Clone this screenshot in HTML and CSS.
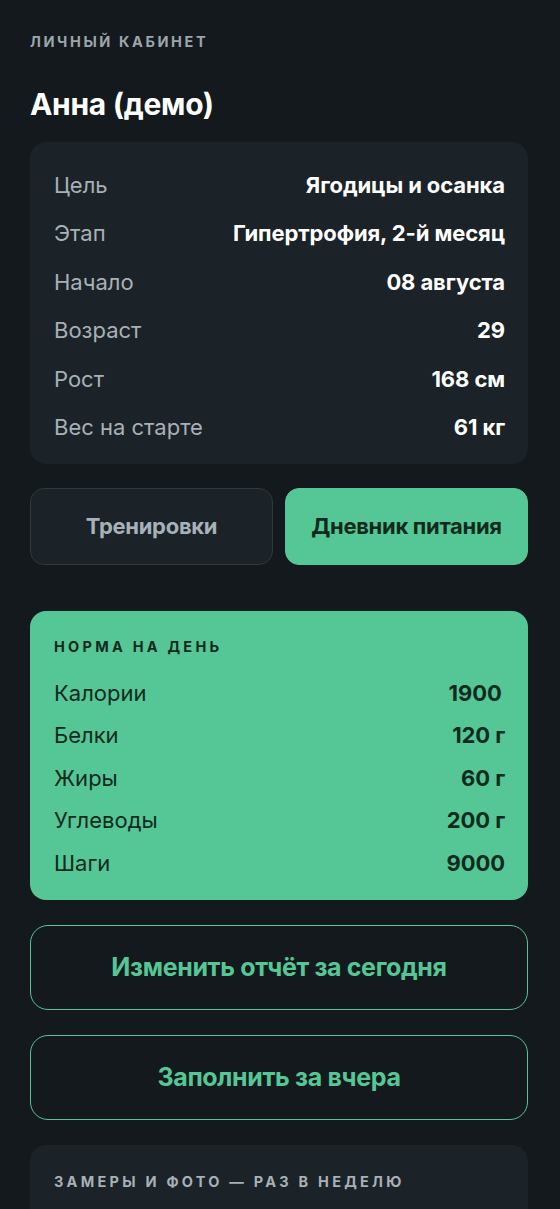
FILE: index.html
```html
<!DOCTYPE html>
<html lang="ru">
<head>
<meta charset="utf-8">
<title>Личный кабинет</title>
<link rel="stylesheet" href="styles.css">
</head>
<body>
<main class="page">
  <div class="eyebrow">Личный кабинет</div>
  <h1 class="title">Анна (демо)</h1>

  <section class="card info">
    <div class="row"><span class="label">Цель</span><span class="value">Ягодицы и осанка</span></div>
    <div class="row"><span class="label">Этап</span><span class="value">Гипертрофия, 2-й месяц</span></div>
    <div class="row"><span class="label">Начало</span><span class="value">08 августа</span></div>
    <div class="row"><span class="label">Возраст</span><span class="value">29</span></div>
    <div class="row"><span class="label">Рост</span><span class="value">168 см</span></div>
    <div class="row"><span class="label">Вес на старте</span><span class="value">61 кг</span></div>
  </section>

  <div class="tabs">
    <button class="tab">Тренировки</button>
    <button class="tab active">Дневник питания</button>
  </div>

  <section class="norm">
    <div class="norm-title">Норма на день</div>
    <div class="norm-rows">
      <div class="row"><span class="label">Калории</span><span class="value">1900&#8201;</span></div>
      <div class="row"><span class="label">Белки</span><span class="value">120 г</span></div>
      <div class="row"><span class="label">Жиры</span><span class="value">60 г</span></div>
      <div class="row"><span class="label">Углеводы</span><span class="value">200 г</span></div>
      <div class="row"><span class="label">Шаги</span><span class="value">9000</span></div>
    </div>
  </section>

  <button class="outline">Изменить отчёт за сегодня</button>
  <button class="outline">Заполнить за вчера</button>

  <section class="card measures">
    <div class="section-title">Замеры и фото — раз в неделю</div>
  </section>
</main>
</body>
</html>
```

FILE: styles.css
```css
* { box-sizing: border-box; }
html, body { margin: 0; padding: 0; }
body {
  background: #13191c;
  font-family: Inter, "Noto Sans", sans-serif;
  color: #ffffff;
  height: 1209px;
  overflow: hidden;
}
.page {
  padding: 34px 32px 0 30px;
  display: flex;
  flex-direction: column;
}
.eyebrow {
  font-size: 14.5px;
  font-weight: 700;
  letter-spacing: 2.6px;
  text-transform: uppercase;
  color: #9ba6ac;
  line-height: 16px;
}
.title {
  margin: 36px 0 0 0;
  font-size: 30px;
  font-weight: 700;
  line-height: 36px;
  letter-spacing: -0.3px;
  color: #ffffff;
}
.card {
  background: #1b2328;
  border-radius: 16px;
}
.info {
  margin-top: 20px;
  padding: 31px 23px 25px 24px;
  display: flex;
  flex-direction: column;
  gap: 24.4px;
}
.row {
  display: flex;
  justify-content: space-between;
  align-items: center;
  font-size: 22px;
  line-height: 24px;
}
.info .label { color: #a7b1b6; }
.info .value { font-weight: 700; color: #ffffff; letter-spacing: -0.1px; }

.tabs {
  margin-top: 24px;
  display: grid;
  grid-template-columns: 1fr 1fr;
  gap: 12px;
}
.tab {
  height: 77px;
  border-radius: 14px;
  font-family: inherit;
  font-size: 22px;
  font-weight: 700;
  background: #1b2328;
  border: 1px solid #2e383e;
  color: #a7b1b8;
  letter-spacing: -0.3px;
}
.tab.active {
  background: #55c796;
  border-color: #55c796;
  color: #0e2a1d;
}

.norm {
  margin-top: 46px;
  background: #55c796;
  border-radius: 16px;
  padding: 28px 23px 25px 24px;
  color: #0e2a1d;
}
.norm-title {
  font-size: 14.5px;
  font-weight: 700;
  letter-spacing: 3.25px;
  text-transform: uppercase;
  line-height: 16px;
}
.norm-rows {
  margin-top: 26px;
  display: flex;
  flex-direction: column;
  gap: 18.5px;
}
.norm .label { color: #0e2a1d; }
.norm .value { font-weight: 700; color: #0e2a1d; letter-spacing: -0.1px; }

.outline {
  margin-top: 25px;
  height: 85px;
  border-radius: 18px;
  border: 1.5px solid #55c796;
  background: transparent;
  color: #55c796;
  font-family: inherit;
  font-size: 25px;
  font-weight: 700;
  letter-spacing: -0.35px;
}
.measures {
  margin-top: 25px;
  padding: 29px 24px 40px 24px;
  height: 120px;
}
.section-title {
  font-size: 14.5px;
  font-weight: 700;
  letter-spacing: 3.25px;
  text-transform: uppercase;
  line-height: 16px;
  color: #a7b1b6;
}
```
